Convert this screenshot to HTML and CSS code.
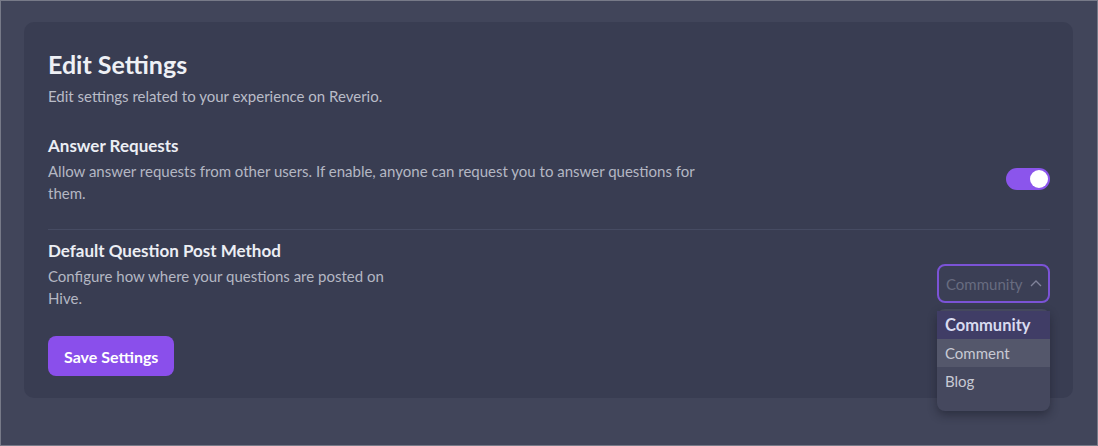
FILE: index.html
```html
<!DOCTYPE html>
<html>
<head>
<meta charset="utf-8">
<link rel="stylesheet" href="styles.css">
</head>
<body>
<div class="page">
  <section class="card">
    <h1 class="title">Edit Settings</h1>
    <p class="subtitle">Edit settings related to your experience on Reverio.</p>

    <div class="row row-first">
      <div class="text text-wide">
        <h2 class="label">Answer Requests</h2>
        <p class="desc">Allow answer requests from other users. If enable, anyone can request you to answer questions for them.</p>
      </div>
      <div class="toggle"><span class="knob"></span></div>
    </div>

    <div class="divider"></div>

    <div class="row row-second">
      <div class="text text-narrow">
        <h2 class="label">Default Question Post Method</h2>
        <p class="desc">Configure how where your questions are posted on Hive.</p>
      </div>
      <div class="select-wrap">
        <div class="select">
          <span class="select-value">Community</span>
          <svg class="chev" width="12" height="8" viewBox="0 0 12 8"><path d="M1 7 L6 2 L11 7" fill="none" stroke="#80839a" stroke-width="1.3"/></svg>
        </div>
        <ul class="menu">
          <li class="opt opt-active">Community</li>
          <li class="opt opt-hover">Comment</li>
          <li class="opt">Blog</li>
        </ul>
      </div>
    </div>

    <button class="save">Save Settings</button>
  </section>
</div>
</body>
</html>
```
FILE: styles.css
```css
* { box-sizing: border-box; }
html, body { margin: 0; padding: 0; height: 100%; }
body {
  background: #41455a;
  font-family: Lato, "Open Sans", sans-serif;
  border: 1px solid #777a88;
}
.page { padding: 21px 24px 0 23px; }
.card {
  background: #393d52;
  border-radius: 10px;
  height: 376px;
  padding: 26px 23px 0 24px;
}
.title {
  margin: 0;
  font-size: 25px;
  line-height: 32px;
  font-weight: 700;
  color: #eef0f5;
}
.subtitle {
  margin: 6px 0 0;
  font-size: 15px;
  line-height: 20px;
  color: #b9bcc8;
}
.row {
  display: flex;
  align-items: center;
  justify-content: space-between;
}
.row-first { margin-top: 29px; }
.row-second { margin-top: 10px; }
.text-wide { max-width: 660px; }
.text-narrow { max-width: 350px; }
.label {
  margin: 0;
  font-size: 17px;
  line-height: 22px;
  font-weight: 700;
  color: #eceef4;
}
.desc {
  margin: 3px 0 0;
  font-size: 15px;
  line-height: 22px;
  color: #b4b7c3;
}
.toggle {
  width: 44px;
  height: 22px;
  border-radius: 11px;
  background: #8b55ec;
  display: flex;
  align-items: center;
  justify-content: flex-end;
  padding-right: 2px;
  margin-top: 18px;
}
.knob {
  width: 18px;
  height: 18px;
  border-radius: 50%;
  background: #fff;
}
.divider {
  height: 1px;
  background: #464b62;
  margin-top: 25px;
}
.select-wrap { position: relative; margin-top: 18px; }
.select {
  width: 113px;
  height: 39px;
  border: 2px solid #7b53d6;
  border-radius: 8px;
  display: flex;
  align-items: center;
  justify-content: space-between;
  padding: 0 6px 0 7px;
  background: #3b3f55;
}
.select-value { font-size: 15px; color: #686c80; }
.chev { margin-top: -1px; }
.menu {
  position: absolute;
  top: 45px;
  left: 0;
  width: 113px;
  margin: 0;
  padding: 2px 0 16px;
  list-style: none;
  background: #45485e;
  border-radius: 8px;
  box-shadow: 0 4px 10px rgba(20, 22, 34, 0.45);
}
.opt {
  height: 28px;
  line-height: 28px;
  padding-left: 8px;
  font-size: 15px;
  color: #c8cad4;
}
.opt-active { background: #403d66; color: #d9dbf0; font-weight: 700; font-size: 16.5px; }
.opt-hover { background: #54576b; }
.save {
  margin-top: 27px;
  height: 40px;
  padding: 0 16px;
  border: none;
  border-radius: 8px;
  background: #8a4feb;
  color: #fff;
  font-family: inherit;
  font-size: 16px;
  font-weight: 700;
}
```
